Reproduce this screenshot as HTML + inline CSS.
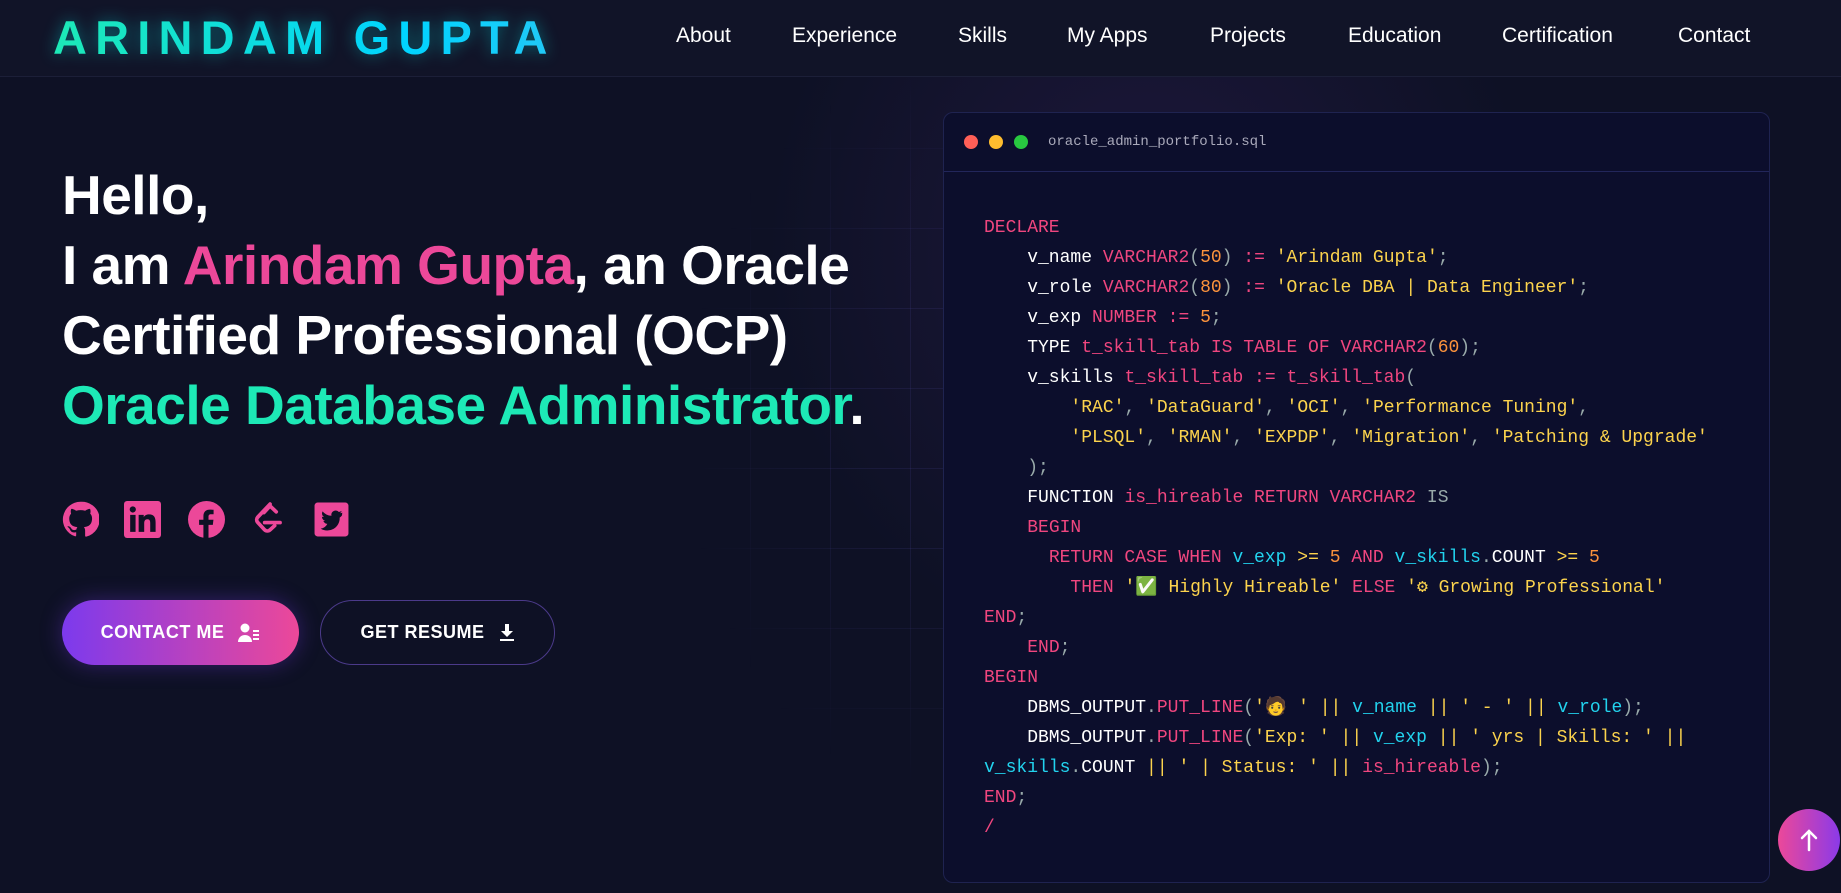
<!DOCTYPE html>
<html><head><meta charset="utf-8"><style>
*{margin:0;padding:0;box-sizing:border-box}
body{width:1841px;height:893px;overflow:hidden;background:#0e1125;font-family:"Liberation Sans",sans-serif;position:relative;color:#fff}
.glow{position:absolute;left:700px;top:40px;width:900px;height:700px;background:radial-gradient(ellipse at 50% 30%,rgba(70,40,120,.28),rgba(0,0,0,0) 60%)}
.grid{position:absolute;left:700px;top:80px;width:260px;height:700px;
background-image:linear-gradient(rgba(90,80,180,.14) 1px,transparent 1px),linear-gradient(90deg,rgba(90,80,180,.14) 1px,transparent 1px);background-size:80px 80px;background-position:50px 68px;
-webkit-mask-image:radial-gradient(ellipse at 100% 50%,#000 30%,transparent 75%)}
nav{position:absolute;left:0;top:0;width:1841px;height:77px;background:#111428;border-bottom:1px solid #1c1f38}
.logo{position:absolute;left:53px;top:10px;font-size:47px;font-weight:bold;letter-spacing:8.2px;background:linear-gradient(90deg,#1de9b6,#00d4ff 70%,#22c8f5);-webkit-background-clip:text;color:transparent;filter:drop-shadow(0 0 8px rgba(0,220,220,.45))}
.nav a{position:absolute;top:24px;font-size:21px;color:#fff;text-decoration:none}
h1{position:absolute;left:62px;top:160px;font-size:55px;line-height:70px;font-weight:bold;letter-spacing:-.5px}
.pk{color:#ec4899}.gr{color:#1de9b6}
.icons svg{position:absolute;top:501px;width:37px;height:37px}
.btn{position:absolute;top:600px;height:65px;border-radius:33px;font-size:18px;font-weight:bold;letter-spacing:.5px;display:flex;align-items:center;justify-content:center;gap:14px}
.b1{left:62px;width:237px;background:linear-gradient(90deg,#7c3aed,#ec4899);box-shadow:0 0 22px rgba(124,58,237,.35)}
.b2{left:320px;width:235px;border:1px solid #4b3a8a}
.card{position:absolute;left:943px;top:112px;width:827px;height:771px;background:#0c0e2c;border:1px solid #1f2350;border-radius:10px}
.hdr{height:59px;border-bottom:1px solid #22265a;position:relative}
.dot{position:absolute;top:22px;width:14px;height:14px;border-radius:50%}
.fn{position:absolute;left:104px;top:21px;font-family:"Liberation Mono",monospace;font-size:14px;color:#aab}
pre{position:absolute;left:40px;top:100px;font-family:"Liberation Mono",monospace;font-size:18px;line-height:30px;color:#fff}
.k{color:#f0467f}.s{color:#fcd34d}.n{color:#fb923c}.g{color:#9aa}.c{color:#22d3ee}
.up{position:absolute;left:1778px;top:809px;width:62px;height:62px;border-radius:50%;background:linear-gradient(90deg,#ec4899,#8b3ae8);display:flex;align-items:center;justify-content:center}
</style></head><body>
<div class="glow"></div><div class="grid"></div>
<nav><div class="logo">ARINDAM GUPTA</div>
<div class="nav"><a style="left:676px">About</a><a style="left:792px">Experience</a><a style="left:958px">Skills</a><a style="left:1067px">My Apps</a><a style="left:1210px">Projects</a><a style="left:1348px">Education</a><a style="left:1502px">Certification</a><a style="left:1678px">Contact</a></div></nav>
<h1>Hello,<br>I am <span class="pk">Arindam Gupta</span>, an Oracle<br>Certified Professional (OCP)<br><span class="gr">Oracle Database Administrator</span>.</h1>
<div class="icons">
<svg style="left:62px" viewBox="0 0 24 24"><path fill="#ec4899" d="M12 .5a11.5 11.5 0 0 0-3.6 22.4c.6.1.8-.3.8-.6v-2c-3.2.7-3.9-1.5-3.9-1.5-.5-1.3-1.3-1.7-1.3-1.7-1-.7.1-.7.1-.7 1.2.1 1.800 1.2 1.8 1.2 1 1.8 2.7 1.3 3.4 1 .1-.8.4-1.3.7-1.6-2.6-.3-5.3-1.3-5.3-5.7 0-1.3.5-2.300 1.2-3.1-.1-.3-.5-1.5.1-3.1 0 0 1-.3 3.2 1.2a11 11 0 0 1 5.8 0c2.2-1.5 3.2-1.2 3.2-1.2.6 1.6.2 2.8.1 3.1.8.8 1.2 1.9 1.2 3.1 0 4.4-2.7 5.4-5.3 5.7.4.4.8 1.1.8 2.2v3.3c0 .3.2.7.8.6A11.5 11.5 0 0 0 12 .5z"/></svg>
<svg style="left:124px" viewBox="0 0 24 24"><rect width="24" height="24" rx="2" fill="#ec4899"/><path fill="#0e1125" d="M4 9h3.5v11H4zM5.7 3.5a2 2 0 1 1 0 4 2 2 0 0 1 0-4zM9.5 9h3.3v1.5c.5-.9 1.6-1.8 3.4-1.8 3.6 0 4.3 2.3 4.3 5.4V20H17v-5.3c0-1.3 0-2.9-1.8-2.9s-2.1 1.4-2.1 2.8V20H9.5z"/></svg>
<svg style="left:188px" viewBox="0 0 24 24"><circle cx="12" cy="12" r="12" fill="#ec4899"/><path fill="#0e1125" d="M13.3 24v-8.5h2.8l.4-3.3h-3.2v-2c0-.9.3-1.6 1.6-1.6h1.7V5.7c-.3 0-1.3-.1-2.5-.1-2.5 0-4.1 1.5-4.1 4.2v2.4H7.2v3.3H10V24z"/></svg>
<svg style="left:250px" viewBox="0 0 24 24" fill="none" stroke="#ec4899" stroke-width="2.4" stroke-linecap="round" stroke-linejoin="round"><path d="M13 2 5 10.5a2.5 2.5 0 0 0 0 3.4l4.5 4.8a2.5 2.5 0 0 0 3.5 0L16 16M9.5 14h10M9 7.5l4-4.3 4 3.8"/></svg>
<svg style="left:313px" viewBox="0 0 24 24"><rect x="1" y="1" width="22" height="22" rx="2" fill="#ec4899"/><path fill="#0e1125" d="M19 7.5c-.5.2-1 .4-1.6.4.6-.3 1-.9 1.2-1.5-.5.3-1.1.5-1.8.7a2.8 2.8 0 0 0-4.8 2.5 8 8 0 0 1-5.8-2.900 2.8 2.8 0 0 0 .9 3.7c-.5 0-.9-.1-1.3-.3 0 1.4 1 2.5 2.2 2.8-.4.1-.8.1-1.3 0 .4 1.1 1.4 1.9 2.6 1.9A5.6 5.6 0 0 1 5 17.9a8 8 0 0 0 12.3-7.1c.6-.4 1.1-.9 1.5-1.5z"/></svg>
</div>
<div class="btn b1">CONTACT ME <svg width="22" height="20" viewBox="0 0 22 20" fill="#fff"><circle cx="7" cy="5" r="4.5"/><path d="M0 19c0-4 3-7 7-7s7 3 7 7z"/><rect x="15" y="7" width="6" height="2"/><rect x="15" y="11" width="6" height="2"/><rect x="15" y="15" width="6" height="2"/></svg></div>
<div class="btn b2">GET RESUME <svg width="16" height="18" viewBox="0 0 16 18" fill="#fff"><path d="M6 0h4v7h4l-6 6-6-6h4z"/><rect x="1" y="15" width="14" height="2"/></svg></div>
<div class="card"><div class="hdr"><div class="dot" style="left:20px;background:#ff5f57"></div><div class="dot" style="left:45px;background:#febc2e"></div><div class="dot" style="left:70px;background:#28c840"></div><div class="fn">oracle_admin_portfolio.sql</div></div>
<pre><span class="k">DECLARE</span>
    v_name <span class="k">VARCHAR2</span><span class="g">(</span><span class="n">50</span><span class="g">)</span> <span class="k">:=</span> <span class="s">'Arindam Gupta'</span><span class="g">;</span>
    v_role <span class="k">VARCHAR2</span><span class="g">(</span><span class="n">80</span><span class="g">)</span> <span class="k">:=</span> <span class="s">'Oracle DBA | Data Engineer'</span><span class="g">;</span>
    v_exp <span class="k">NUMBER :=</span> <span class="n">5</span><span class="g">;</span>
    TYPE <span class="k">t_skill_tab IS TABLE OF VARCHAR2</span><span class="g">(</span><span class="n">60</span><span class="g">);</span>
    v_skills <span class="k">t_skill_tab := t_skill_tab</span><span class="g">(</span>
        <span class="s">'RAC'</span><span class="g">,</span> <span class="s">'DataGuard'</span><span class="g">,</span> <span class="s">'OCI'</span><span class="g">,</span> <span class="s">'Performance Tuning'</span><span class="g">,</span>
        <span class="s">'PLSQL'</span><span class="g">,</span> <span class="s">'RMAN'</span><span class="g">,</span> <span class="s">'EXPDP'</span><span class="g">,</span> <span class="s">'Migration'</span><span class="g">,</span> <span class="s">'Patching &amp; Upgrade'</span>
    <span class="g">);</span>
    FUNCTION <span class="k">is_hireable RETURN VARCHAR2</span> <span class="g">IS</span>
    <span class="k">BEGIN</span>
      <span class="k">RETURN CASE WHEN</span> <span class="c">v_exp</span> <span class="s">&gt;=</span> <span class="n">5</span> <span class="k">AND</span> <span class="c">v_skills</span><span class="g">.</span>COUNT <span class="s">&gt;=</span> <span class="n">5</span>
        <span class="k">THEN</span> <span class="s">'✅ Highly Hireable'</span> <span class="k">ELSE</span> <span class="s">'⚙ Growing Professional'</span>
<span class="k">END</span><span class="g">;</span>
    <span class="k">END</span><span class="g">;</span>
<span class="k">BEGIN</span>
    DBMS_OUTPUT<span class="g">.</span><span class="k">PUT_LINE</span><span class="g">(</span><span class="s">'🧑 '</span> <span class="s">||</span> <span class="c">v_name</span> <span class="s">||</span> <span class="s">' - '</span> <span class="s">||</span> <span class="c">v_role</span><span class="g">);</span>
    DBMS_OUTPUT<span class="g">.</span><span class="k">PUT_LINE</span><span class="g">(</span><span class="s">'Exp: '</span> <span class="s">||</span> <span class="c">v_exp</span> <span class="s">||</span> <span class="s">' yrs | Skills: '</span> <span class="s">||</span>
<span class="c">v_skills</span><span class="g">.</span>COUNT <span class="s">||</span> <span class="s">' | Status: '</span> <span class="s">||</span> <span class="k">is_hireable</span><span class="g">);</span>
<span class="k">END</span><span class="g">;</span>
<span class="k">/</span></pre></div>
<div class="up"><svg width="20" height="24" viewBox="0 0 20 24" fill="none" stroke="#fff" stroke-width="2.5" stroke-linecap="round"><path d="M10 22V3M3 10l7-7 7 7"/></svg></div>
</body></html>
